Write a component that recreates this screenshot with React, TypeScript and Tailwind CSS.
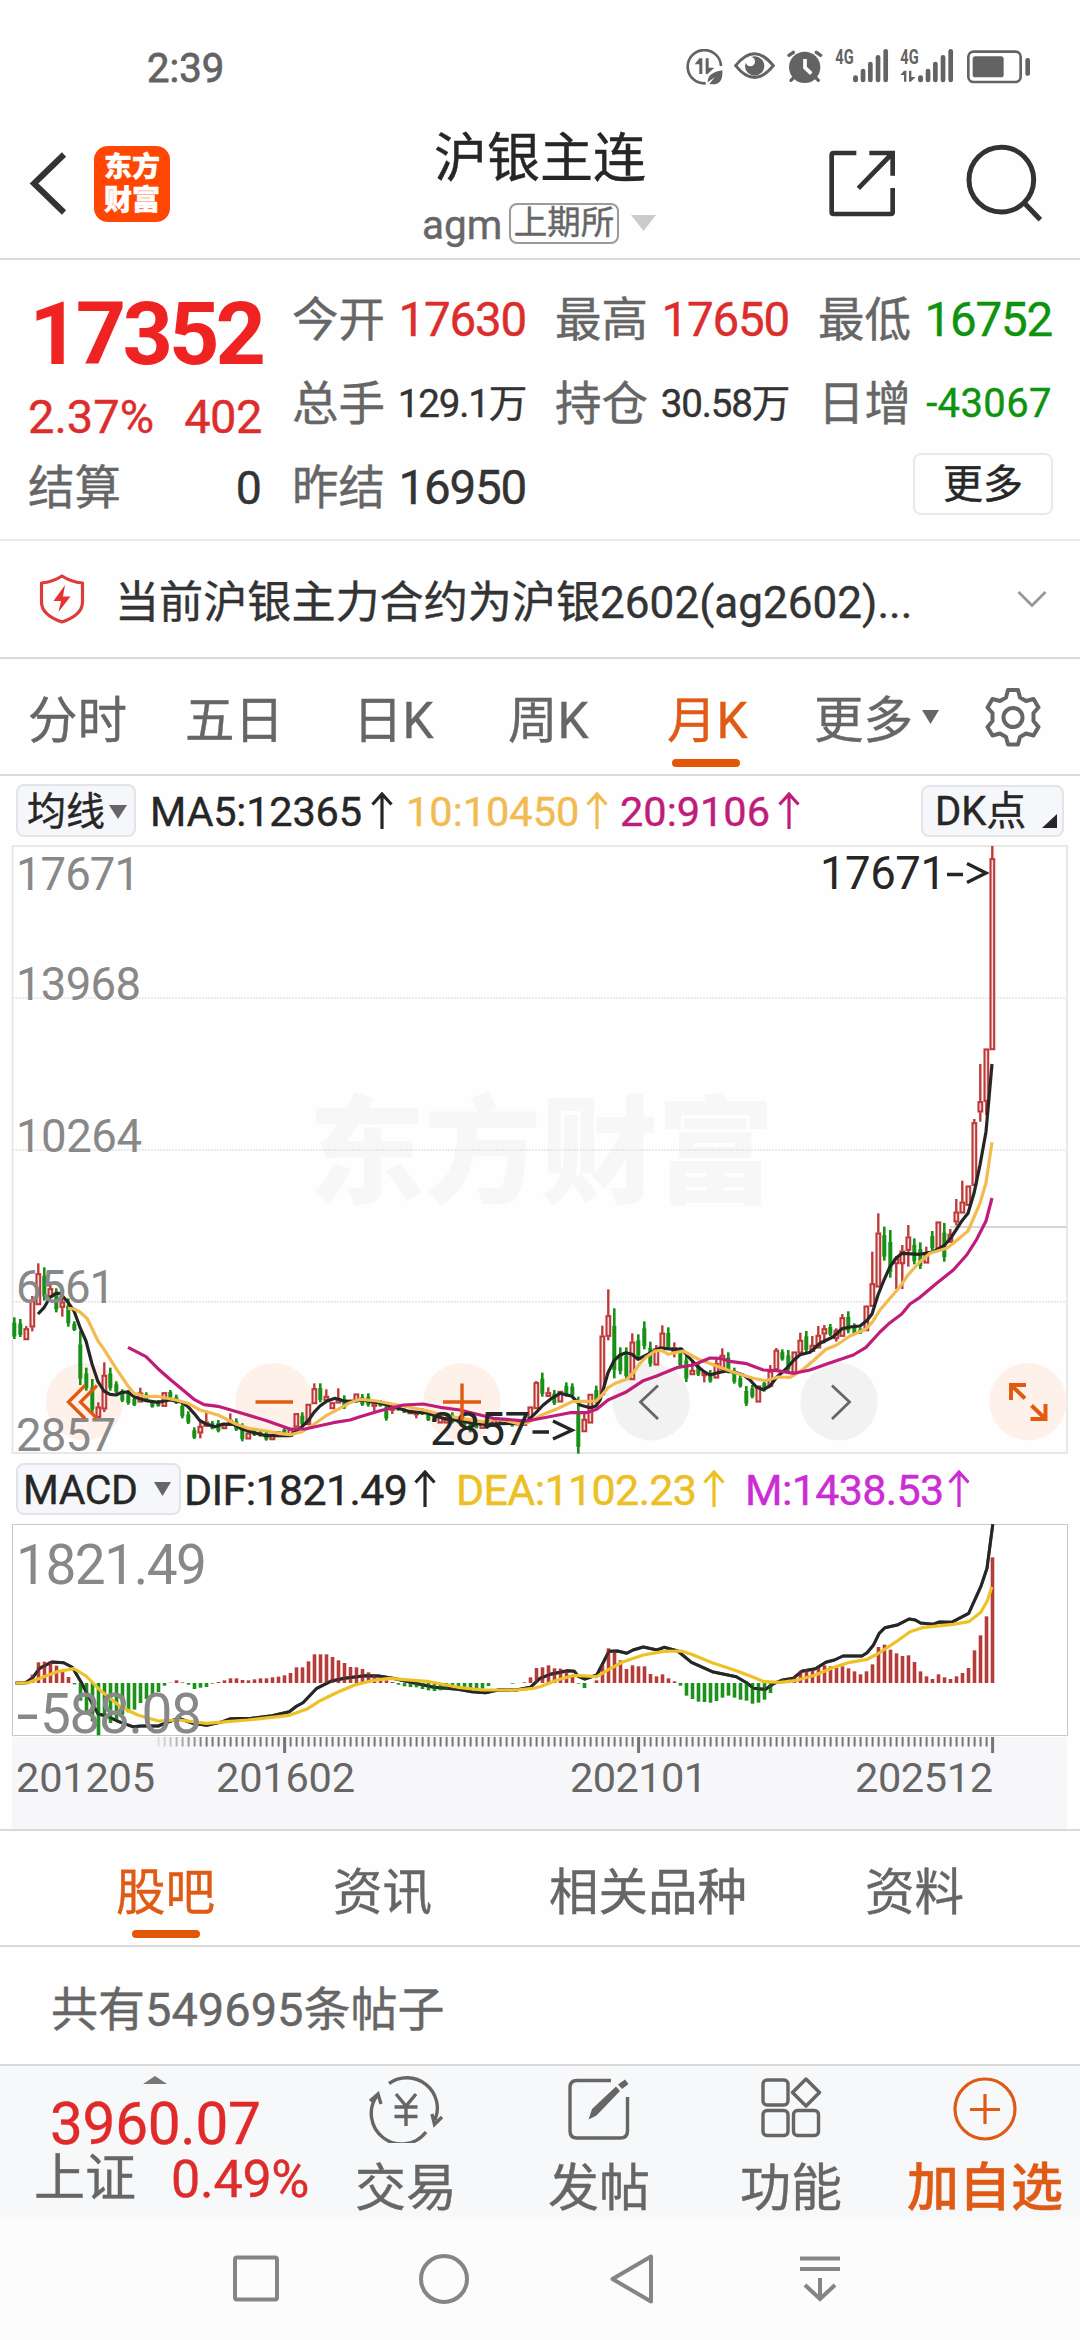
import React from "react";

/* ---------- chart data ---------- */

// Each candle: colour, high, body top, body bottom, low (units of 1/3 px below the section's origin).
type Candle = ["r" | "g", number, number, number, number];

const g = (hi: number, lo: number): Candle => ["g", hi, hi + (lo - hi) * 0.25, lo - (lo - hi) * 0.12, lo];
const r = (top: number, bottom: number, hi = top, lo = bottom): Candle => ["r", hi, top, bottom, lo];

const early: Candle[] = [
  g(232, 297), g(237, 291), r(265, 300, 258), r(180, 262, 168, 274), r(100, 195, 70), g(82, 182), r(145, 172, 125), g(145, 217),
  r(185, 203, 165, 230), g(175, 260), g(244, 273), g(273, 435), g(383, 452), g(417, 520), r(500, 533, 487), r(405, 508, 367, 516),
  g(383, 452), g(424, 460), g(448, 486), g(450, 494), g(470, 498), r(458, 487, 443), g(457, 485), g(480, 503), g(480, 500),
  r(457, 500), g(450, 475), g(464, 492), g(485, 535), g(514, 552), g(562, 597), r(558, 580, 545, 595), r(545, 560, 512),
  g(543, 568), g(540, 577), r(553, 567), r(540, 557, 520), g(535, 573), g(550, 604), r(578, 598, 570), g(565, 588), g(570, 590),
  g(572, 602), r(582, 600), r(575, 590), g(565, 580), r(567, 590), r(520, 562), g(517, 558), r(492, 555), r(445, 492, 430),
  g(430, 487), r(468, 482, 448), r(487, 507), r(475, 490, 445), g(466, 507), r(480, 488), r(461, 482), g(462, 498), g(460, 500),
  r(488, 500, 488, 514), g(480, 500), g(487, 542), r(497, 512, 495, 522), g(500, 512), g(505, 519), r(510, 522), r(515, 525, 515, 535),
  g(505, 525), g(515, 543), g(520, 546), r(530, 550), r(537, 550), g(517, 550), g(530, 550), g(532, 560), g(545, 577),
  g(550, 565), r(552, 566), r(542, 560), r(537, 555), g(538, 552), r(540, 550), g(540, 560), r(545, 556), r(540, 557),
  r(500, 540), r(427, 507, 423), g(398, 470), r(457, 470, 442), g(450, 495), r(453, 487), g(427, 470), g(430, 470), g(470, 641),
  r(537, 576, 520), r(462, 550), g(437, 490), r(287, 465, 257), r(226, 290, 148, 301), g(205, 415), g(322, 403), g(322, 420),
  r(305, 420, 280), g(283, 355), g(244, 328), g(305, 380), r(325, 376, 315), r(278, 325, 256), g(262, 330), r(322, 340, 307, 352),
  g(322, 383), g(340, 426), r(390, 405, 360), g(370, 408), r(397, 408, 395, 427), g(390, 428), r(370, 415, 355),
];

const late: Candle[] = [
  r(945, 990, 925), g(937, 1000), g(983, 1031), g(1005, 1043), g(1038, 1098), g(1035, 1075), r(1037, 1087), g(1020, 1055),
  r(993, 1040, 975), r(930, 990, 924), g(928, 962), g(930, 995), r(935, 1000), r(900, 940, 878), g(873, 938), r(915, 935, 888),
  r(885, 925, 858), r(865, 883, 855, 910), g(852, 888), r(870, 897, 865, 905), r(832, 890, 822), g(814, 880), g(850, 883),
  g(862, 882), r(797, 873), r(730, 800, 635), r(578, 742, 520), g(560, 662), g(570, 713), r(655, 672, 648, 747),
  r(632, 672, 615, 747), r(590, 632, 555, 680), g(595, 673), g(607, 687), r(642, 670, 620), g(573, 632), r(545, 630),
  g(549, 665), r(582, 608, 567), r(515, 547, 477, 556), r(485, 520, 422), r(437, 497), r(247, 437, 237), r(184, 217, 72, 245),
  r(26, 185, 26, 226), r(-545, 30, -582),
];

const macd = [
  0, 0, 2, 25, 62, 64, 66, 52, 35, 18, -4, -53, -85, -115, -157, -130, -120, -110, -95, -88, -80, -60, -48, -35, -27, -8, 1, 8, 2,
  -5, -18, -14, -12, -2, 3, 8, 14, 14, 9, 8, 11, 14, 14, 17, 19, 23, 30, 47, 47, 65, 86, 86, 86, 78, 68, 60, 48, 47, 42, 32, 27,
  15, 8, 3, -5, -10, -12, -13, -18, -22, -24, -22, -20, -18, -16, -18, -20, -20, -17, -9, 0, 0, 0, -2, 0, 2, 17, 45, 47, 53, 44, 43,
  38, 25, -2, -15, 0, 8, 55, 104, 95, 68, 42, 53, 50, 50, 27, 20, 26, 14, 5, -8, -38, -48, -56, -57, -59, -54, -44, -38, -44, -50,
  -53, -62, -59, -50, -30, 3, 12, 15, 20, 37, 40, 38, 45, 53, 50, 45, 50, 44, 35, 26, 35, 56, 108, 115, 100, 89, 81, 83, 63, 35,
  20, 12, 26, 17, 12, 20, 30, 45, 98, 143, 200, 377,
];

const ma5: number[][] = [
  [114,222,132,203,150,172,168,160,180,160,204,187,222,213,240,262,258,303,276,372,294,425,312,453,330,463,348,465,366,457,384,456,402,470,438,482,474,487,510,480,546,487,564,500,582,520,600,542,618,552,645,560,670,552,700,553,726,567,762,578,798,587,834,587,870,587,888,573,906,560,924,543,942,517,960,498,980,484,1005,475,1032,483,1068,484],
  [0,480,50,487,100,500,150,515,200,519,250,535,300,542,350,552,400,552,460,550,500,545,528,518,550,495,575,475,600,460,636,469,660,495,690,503,708,498,720,480,732,440,744,398,762,362,780,345,798,338,816,343,834,358,860,345,900,324,942,328,965,327,980,345,1010,377,1030,393,1050,405,1078,397],
  [20,993,45,997,70,1005,90,1020,110,1042,130,1049,150,1038,170,1012,200,985,222,960,240,944,270,937,300,910,340,890,366,866,390,861,420,858,440,842,456,822,474,765,492,720,510,680,528,655,546,640,600,643,640,635,672,617,690,597,708,570,726,542,744,520,762,460,780,375,798,275,816,72],
];
const ma10: number[][] = [
  [204,205,222,207,240,216,262,236,294,303,312,328,348,385,384,438,402,460,438,470,470,469,528,480,564,490,600,510,654,525,708,552,744,565,798,573,834,580,870,584,906,575,942,553,978,527,1014,508,1050,488],
  [0,478,50,483,100,493,150,502,200,512,250,525,300,535,380,547,400,537,440,542,480,552,505,547,545,525,590,507,636,485,672,484,708,483,726,465,744,443,770,428,800,418,820,398,840,370,860,350,885,333,905,331,925,343,970,333,1014,357],
  [0,982,50,1000,100,1015,135,1022,175,1011,210,1012,240,995,280,962,318,928,350,915,390,888,436,868,456,848,480,810,510,775,540,740,564,705,600,665,630,640,680,625,700,610,744,573,780,490,798,428,816,307],
];
const ma20: number[][] = [
  [384,322,438,350,474,386,510,418,546,448,582,478,612,494,654,499,726,520,800,542,870,567,915,567,1000,548,1050,540],
  [0,530,60,512,130,495,190,492,240,502,300,510,400,535,500,543,560,532,630,518,680,518,710,508,744,480,800,455,850,422,890,408,950,383,1000,375,1050,354],
  [0,955,30,964,80,971,130,990,170,992,222,1000,270,990,318,973,400,945,438,922,480,876,510,848,545,822,570,792,600,772,650,730,700,690,740,645,770,598,798,543,816,474],
];
const dif: number[][] = [
  [45,669,75,668,95,653,115,625,150,606,185,608,210,622,235,665,260,715,285,762,310,768,345,785,385,800,410,798,460,798,490,785,520,775,560,790,600,796,640,787,670,776,730,775,790,767,840,755,862,738,880,728,920,685,960,664,1000,655,1060,647,1100,648,1140,655,1200,668,1260,682,1330,688,1370,695,1410,698,1450,689,1500,690,1540,682],
  [0,655,30,643,80,632,100,634,110,648,130,657,165,645,180,615,200,574,225,573,252,580,270,570,300,561,340,570,360,562,400,573,440,607,500,635,570,650,600,668,620,685,655,688,680,670,705,660,735,655,760,634,800,626,830,607,855,600,880,588,935,588,950,578,968,556,985,520,1002,503,1040,494,1072,477,1090,480,1105,489,1140,493,1160,486,1195,487,1245,460,1280,380,1298,325,1315,193],
];
const dea: number[][] = [
  [45,669,80,669,120,653,170,634,215,626,250,648,290,690,350,740,400,765,460,783,520,780,600,790,660,785,720,780,840,766,890,748,930,722,980,697,1030,675,1080,662,1130,655,1240,664,1330,682,1400,690,1500,690,1550,685],
  [0,680,50,660,100,646,165,650,200,628,240,606,300,585,360,574,410,573,440,583,500,608,570,632,620,652,650,665,700,667,740,662,800,645,850,623,900,607,950,598,980,582,1030,548,1075,515,1110,503,1200,493,1245,485,1280,457,1300,420,1312,380],
];

const origins = [
  [0, 1240],
  [360, 1240],
  [720, 1040],
];

function pricePath(parts: number[][]) {
  const pts: string[] = [];
  parts.forEach((p, k) => {
    for (let i = 0; i < p.length; i += 2) {
      pts.push(`${(origins[k][0] + p[i] / 3).toFixed(1)},${(origins[k][1] + p[i + 1] / 3).toFixed(1)}`);
    }
  });
  return pts.join(" ");
}

function macdPath(parts: number[][]) {
  const pts: string[] = [];
  parts.forEach((p, k) => {
    for (let i = 0; i < p.length; i += 2) {
      pts.push(`${(k * 540 + p[i] / 2.904).toFixed(1)},${(1460 + p[i + 1] / 3).toFixed(1)}`);
    }
  });
  return pts.join(" ");
}

const xOf = (i: number) => 14.2 + i * 6;
const RED = "#bd3a38";
const GREEN = "#169116";

function CandleMark({ c, x, base }: { c: Candle; x: number; base: number }) {
  const [kind, hi, top, bottom, lo] = c;
  const y = (v: number) => base + v / 3;
  if (kind === "g") {
    return (
      <>
        <rect x={x - 1.2} y={y(hi)} width={2.6} height={(lo - hi) / 3} fill={GREEN} />
        <rect x={x - 1.9} y={y(top)} width={4} height={(bottom - top) / 3} fill={GREEN} />
      </>
    );
  }
  return (
    <>
      {hi < top && <rect x={x - 1.1} y={y(hi)} width={2.4} height={(top - hi) / 3} fill={RED} />}
      {lo > bottom && <rect x={x - 1.1} y={y(bottom)} width={2.4} height={(lo - bottom) / 3} fill={RED} />}
      <rect x={x - 1.7} y={y(top) + 0.8} width={3.7} height={Math.max(1, (bottom - top) / 3 - 1.6)} fill="#f7dcdc" stroke={RED} strokeWidth={2.1} />
    </>
  );
}

const FONT = 'Roboto, "Noto Sans CJK SC", sans-serif';

function PriceChart() {
  return (
    <svg className="block overflow-visible" width={1080} height={610} viewBox="0 845 1080 610" fontFamily={FONT}>
      <text x={308} y={1194} fontSize={117} fontWeight={900} fill="#f7f7f7" textLength={466}>东方财富</text>
      <rect x={12.5} y={846} width={1054.5} height={607} fill="none" stroke="#e3e3e3" strokeWidth={1.6} />
      {[998, 1150, 1301.7].map((y) => (
        <line key={y} x1={13} x2={1067} y1={y} y2={y} stroke="#e4e4e4" strokeWidth={1.4} strokeDasharray="2 1" />
      ))}
      {[84.7, 274, 462, 1028].map((x) => (
        <circle key={x} cx={x} cy={1401.7} r={38.7} fill="#fef1ea" />
      ))}
      {[651, 839].map((x) => (
        <circle key={x} cx={x} cy={1401.7} r={38.7} fill="#f2f2f2" />
      ))}
      <line x1={950} x2={1067} y1={1227} y2={1227} stroke="#d6d5db" strokeWidth={1.8} />
      {early.map((c, i) => (
        <CandleMark key={i} c={c} x={xOf(i)} base={1240} />
      ))}
      {late.map((c, i) => (
        <CandleMark key={i} c={c} x={xOf(early.length + i)} base={1040} />
      ))}
      <g fill="none" strokeWidth={3.2} strokeLinejoin="round">
        <polyline points={pricePath(ma5)} stroke="#262626" />
        <polyline points={pricePath(ma10)} stroke="#f1bb50" />
        <polyline points={pricePath(ma20)} stroke="#c01c7a" />
      </g>
      <g fontSize={45.5} fill="#888">
        <text x={16} y={890} textLength={124}>17671</text>
        <text x={16} y={999.5} textLength={125}>13968</text>
        <text x={16} y={1151.5} textLength={126}>10264</text>
        <text x={16} y={1303} textLength={99}>6561</text>
        <text x={16} y={1451} textLength={100}>2857</text>
      </g>
      <g fontSize={45.5} fill="#262626">
        <text x={820} y={889} textLength={126}>17671</text>
        <text x={430} y={1445} textLength={100}>2857</text>
      </g>
      <g fill="none" stroke="#262626" strokeWidth={3.4}>
        <path d="M947 874.500H963M967 863.500L986 873L967 882.500" />
        <path d="M532.500 1432H549M553 1421L572 1430.200L553 1439" />
      </g>
      <g fill="none" stroke="#e05a10" strokeWidth={3.4}>
        <path d="M85 1385.500L68.500 1402L85 1418.500M97 1385.500L80.500 1402L97 1418.500" />
        <path d="M255.500 1402H293" />
        <path d="M443 1402H481M462 1383.500V1420.500" />
        <path d="M1026 1385H1011V1400M1011.500 1385.500L1025 1398.500M1030.500 1419H1045.500V1404M1045 1418.500L1031.500 1405.500" strokeWidth={4} />
      </g>
      <g fill="none" stroke="#666" strokeWidth={2.8}>
        <path d="M658 1385.500L640.500 1402L658 1419" />
        <path d="M832 1385.500L849.500 1402L832 1419" />
      </g>
    </svg>
  );
}

function MacdChart() {
  return (
    <svg className="block overflow-visible" width={1080} height={306} viewBox="0 1523 1080 306" fontFamily={FONT}>
      <rect x={12} y={1737} width={1055} height={92} fill="#f7f7f9" />
      <rect x={12.5} y={1524.5} width={1055} height={211} fill="#fff" stroke="#c8c8c8" strokeWidth={1} />
      <polyline points={macdPath(dif)} fill="none" stroke="#262626" strokeWidth={3} strokeLinejoin="round" />
      {macd.map((v, i) =>
        v === 0 ? null : (
          <rect
            key={i}
            x={xOf(i) - 1.5}
            y={v > 0 ? 1683 - v / 3 : 1683}
            width={3.6}
            height={Math.abs(v) / 3}
            fill={v > 0 ? "#b43c3a" : "#1c921c"}
          />
        )
      )}
      <polyline points={macdPath(dif)} fill="none" stroke="#262626" strokeWidth={3} strokeOpacity={0.7} strokeLinejoin="round" />
      <polyline points={macdPath(dea)} fill="none" stroke="#eec227" strokeWidth={3.2} strokeLinejoin="round" />
      <g fontSize={55} fill="#888">
        <text x={16} y={1584} textLength={191}>1821.49</text>
        <text x={40} y={1733} textLength={162}>588.08</text>
        <rect x={18} y={1714.500} width={19} height={4.500} />
      </g>
      {Array.from({ length: 140 }, (_, k) => k + 24).map((i) => {
        const long = i === 45 || i === 104 || i === 163;
        return (
          <rect
            key={i}
            x={xOf(i) + 0.4 - (long ? 1.5 : 1)}
            y={1737}
            width={long ? 3 : 2}
            height={long ? 16 : 9.5}
            fill="#757575"
            opacity={Math.min(1, (i - 22) / 10)}
          />
        );
      })}
      <g fontSize={41.500} fill="#666">
        <text x={16} y={1792} textLength={139}>201205</text>
        <text x={216} y={1792} textLength={139}>201602</text>
        <text x={570} y={1792} textLength={137}>202101</text>
        <text x={855} y={1792} textLength={138}>202512</text>
      </g>
    </svg>
  );
}

/* ---------- small pieces ---------- */

function Caret({ w, h, color, up = false }: { w: number; h: number; color: string; up?: boolean }) {
  return (
    <svg className="block shrink-0" width={w} height={h} viewBox="0 0 10 10" preserveAspectRatio="none">
      <path d={up ? "M5 0L10 10H0z" : "M0 0H10L5 10z"} fill={color} />
    </svg>
  );
}

function UpArrow() {
  return (
    <svg className="block shrink-0" width={22} height={38} viewBox="0 0 22 38" fill="none" stroke="currentColor" strokeWidth={3.2}>
      <path d="M11 2V37M1.500 12.500L11 2L20.500 12.500" />
    </svg>
  );
}

function Signal({ data = false }: { data?: boolean }) {
  return (
    <svg className="block overflow-visible" width={53.4} height={34} viewBox="0 0 160 102" fill="#636363">
      <text x={1} y={44} fontSize={60} fontWeight={700} fontFamily="Roboto, sans-serif" textLength={55} lengthAdjust="spacingAndGlyphs">4G</text>
      <rect x={54} y={79} width={15} height={21} rx={7} />
      <rect x={77} y={59} width={14} height={41} rx={7} />
      <rect x={99} y={38} width={14} height={62} rx={7} />
      <rect x={122} y={18} width={14} height={82} rx={7} />
      <rect x={145} y={0} width={14} height={100} rx={7} />
      {data && <path d="M12 65H19V98H12V78H1zM27 65H34V84H47L32 98H27z" />}
    </svg>
  );
}

function StatusBar() {
  return (
    <div className="flex h-[100px] items-start text-[#636363]">
      <span className="ml-[147px] mt-[45px] w-[79px] whitespace-nowrap text-[40px] leading-[48px] [-webkit-text-stroke:0.8px]">2:39</span>
      <svg className="ml-[460px] mt-[49px] block" width={37} height={37} viewBox="78 57 111 111">
        <path d="M183 108A50 50 0 1 0 137 160" fill="none" stroke="#636363" strokeWidth={8} />
        <path d="M118 85H127V132H118V103H104zM137 85H146V113H163L143 132H137z" fill="#636363" />
        <path d="M187 121Q190 163 158 163L148 162L164 142L143 157Q142 128 187 121z" fill="#636363" />
      </svg>
      <svg className="ml-[11px] mt-[52px] block" width={41} height={28} viewBox="222 68 123 84">
        <path d="M227 109Q283 38 340 109Q283 180 227 109z" fill="none" stroke="#636363" strokeWidth={9} />
        <circle cx={284} cy={110} r={29} fill="#636363" />
        <circle cx={271} cy={97} r={14} fill="#fff" />
      </svg>
      <svg className="ml-[12px] mt-[50px] block" width={36} height={34} viewBox="380 60 108 102">
        <circle cx={433} cy={112} r={47} fill="#636363" />
        <path d="M386 76L399 67M481 76L468 67M392 151L400 143M474 151L466 143" stroke="#636363" strokeWidth={10} strokeLinecap="round" />
        <path d="M434 87V113L453 131" fill="none" stroke="#fff" strokeWidth={11} />
      </svg>
      <div className="ml-[12px] mt-[49px]"><Signal /></div>
      <div className="ml-[12px] mt-[49px]"><Signal data /></div>
      <svg className="ml-[13px] mt-[50px] block" width={63} height={34} viewBox="915 59 189 102">
        <rect x={919} y={64} width={157} height={91} rx={16} fill="none" stroke="#636363" strokeWidth={8} />
        <rect x={932} y={78} width={93} height={63} rx={8} fill="#636363" />
        <rect x={1090} y={83} width={14} height={53} rx={6} fill="#636363" />
      </svg>
    </div>
  );
}

function Header() {
  return (
    <header className="flex h-[160px] items-start border-b-2 border-[#d9d9d9]">
      <svg className="ml-[29px] mt-[52px] block" width={38} height={63} viewBox="29 152 38 63" fill="none" stroke="#333" strokeWidth={6}>
        <path d="M64 154.500L34 183.500L64 212.500" />
      </svg>
      <div className="ml-[27px] mt-[46px] flex h-[76px] w-[76px] flex-col items-center justify-center rounded-[14px] bg-[#ff4602] text-[28px] font-black leading-[33px] text-white">
        <span>东方</span>
        <span>财富</span>
      </div>
      <div className="ml-[247px] mt-[23px] flex w-[246px] flex-col items-center">
        <h1 className="whitespace-nowrap text-[53px] leading-[72px] text-[#262626]">沪银主连</h1>
        <div className="flex h-[56px] w-full items-center text-[#666]">
          <span className="ml-[5px] w-[81px] whitespace-nowrap pt-[3px] text-[40.500px] leading-[50px]">agm</span>
          <span className="ml-[6px] flex h-[41px] w-[110px] items-center justify-center whitespace-nowrap rounded-lg border-2 border-[#9b9b9b] text-[33.500px] leading-[38px]">上期所</span>
          <span className="ml-[12px]"><Caret w={25} h={16} color="#cbcbcb" /></span>
        </div>
      </div>
      <svg className="ml-[166px] mt-[50px] block" width={68} height={68} viewBox="506 361 204 204" fill="none" stroke="#333" strokeWidth={14}>
        <path d="M588 370H520Q514 370 514 376V547Q514 553 520 553H691Q697 553 697 547V475" />
        <path d="M627 370H697V438M697 370L594 476" />
      </svg>
      <svg className="ml-[69px] mt-[44px] block" width={77} height={78} viewBox="915 343 231 234" fill="none" stroke="#333" strokeWidth={15}>
        <circle cx={1021} cy={450} r={97} />
        <path d="M1090 520L1138 570" />
      </svg>
    </header>
  );
}

function Stat({ label, value, tone, size = "text-[47.500px] tracking-[-0.025em]" }: { label: string; value: string; tone: string; size?: string }) {
  return (
    <div className="flex h-[84px] items-center justify-between whitespace-nowrap pt-[5px]">
      <span className="text-[46.500px] leading-[50px] text-[#666]">{label}</span>
      <span className={`${size} leading-[50px] ${tone}`}>{value}</span>
    </div>
  );
}

function Quote() {
  const small = "text-[38.500px] tracking-[-0.03em]";
  return (
    <section className="flex h-[281px] border-b-2 border-[#ebebeb]">
      <div className="ml-[28px] w-[234px] whitespace-nowrap pt-[32px]">
        <div className="text-right text-[88px] font-bold leading-[84px] tracking-[-0.045em] text-[#f02323] [-webkit-text-stroke:0px]">
          <span>17352</span>
        </div>
        <div className="mt-[16px] flex justify-between text-[47px] leading-[50px] text-[#dc2d2d]">
          <span>2.37%</span>
          <span className="tracking-[-0.01em]">402</span>
        </div>
        <div className="mt-[20px] flex justify-between text-[46.500px] leading-[52px] text-[#666]">
          <span>结算</span>
          <span className="text-[#333]">0</span>
        </div>
      </div>
      <div className="ml-[30px] mt-[15px] w-[234px]">
        <Stat label="今开" value="17630" tone="text-[#dc2d2d]" />
        <Stat label="总手" value="129.1万" tone="text-[#333]" size={small} />
        <Stat label="昨结" value="16950" tone="text-[#333]" />
      </div>
      <div className="ml-[29px] mt-[15px] w-[234px]">
        <Stat label="最高" value="17650" tone="text-[#dc2d2d]" />
        <Stat label="持仓" value="30.58万" tone="text-[#333]" size={small} />
      </div>
      <div className="ml-[29px] mt-[15px] w-[234px]">
        <Stat label="最低" value="16752" tone="text-[#0f930f]" />
        <Stat label="日增" value="-43067" tone="text-[#0f930f]" size="text-[40px] tracking-[0.01em]" />
        <div className="-mr-px ml-auto mt-[10px] flex h-[62px] w-[140px] items-center justify-center rounded-lg border-2 border-[#e8ebeb] pt-[2px] text-[40px] leading-[50px] text-[#262626]">更多</div>
      </div>
    </section>
  );
}

function Notice() {
  return (
    <section className="flex h-[118px] items-center border-b-2 border-[#d9d9d9] text-[#333]">
      <svg className="ml-[39px] block" width={46} height={52} viewBox="39 572 46 52">
        <path d="M62 575Q71 581 82.500 582V601Q82.500 614 62 621Q41.500 614 41.500 601V582Q53 581 62 575z" fill="none" stroke="#dc3c3a" strokeWidth={3.200} strokeLinejoin="round" />
        <path d="M65 584L53.500 600H61L58.500 611L70.500 595.500H63z" fill="#e8322f" />
      </svg>
      <span className="ml-[30px] w-[800px] whitespace-nowrap pt-[7px] text-[44.100px] leading-[54px]">当前沪银主力合约为沪银2602(ag2602)...</span>
      <svg className="ml-[102px] block" width={30} height={18} viewBox="0 0 30 18" fill="none" stroke="#999" strokeWidth={2.8}>
        <path d="M1.500 2L15 15.500L28.500 2" />
      </svg>
    </section>
  );
}

function PeriodTabs() {
  const tabs = ["分时", "五日", "日K", "周K", "月K"];
  return (
    <nav className="grid h-[117px] grid-cols-[157px_168px_155px_159px_147px_169px_60px] items-center whitespace-nowrap border-b-2 border-[#d9d9d9] pl-[28px] text-[49.500px] leading-[60px] text-[#666]">
      {tabs.map((t) => (
        <div key={t} className={`relative pt-[8px] ${t === "月K" ? "text-[#df5b15]" : ""}`}>
          {t}
          {t === "月K" && <span className="absolute -bottom-[16px] left-[5px] h-[8px] w-[68px] rounded-full bg-[#e35709]" />}
        </div>
      ))}
      <div className="flex items-center pt-[8px]">
        更多
        <span className="mb-[8px] ml-[9px]"><Caret w={17} h={14} color="#666" /></span>
      </div>
      <svg className="mt-px block" width={60} height={60} viewBox="0 0 60 60" fill="none" stroke="#666" strokeWidth={4}>
        <path d="M25 3H35L37 10.500L43 14L50.500 12L55.500 20.500L50.500 26V34L55.500 40L50.500 48.500L43 46.500L37 50L35 57.500H25L23 50L17 46.500L9.500 48.500L4.500 40L9.500 34V26L4.500 20.500L9.500 12L17 14L23 10.500z" strokeLinejoin="round" />
        <circle cx={30} cy={30.500} r={9.500} />
      </svg>
    </nav>
  );
}

function MaRow() {
  return (
    <div className="flex h-[69px] items-center whitespace-nowrap text-[41.500px] leading-[50px] text-[#262626]">
      <div className="ml-[16px] flex h-[53px] w-[120px] items-center rounded-lg border-2 border-[#e3e5e8] bg-[#f6f7fa] pl-[9px] pt-[2px] text-[39px]">
        均线
        <span className="ml-[4px]"><Caret w={18} h={14} color="#666" /></span>
      </div>
      <span className="ml-[14px] w-[221px] pt-[2px] tracking-[-0.005em]">MA5:12365</span>
      <UpArrow />
      <span className="ml-[13px] w-[180px] pt-[2px] text-[#f1bb50]">10:10450</span>
      <span className="text-[#f1bb50]"><UpArrow /></span>
      <span className="ml-[12px] w-[158px] pt-[2px] text-[#c01c7a]">20:9106</span>
      <span className="text-[#c01c7a]"><UpArrow /></span>
      <div className="ml-[121px] flex h-[52px] w-[143px] items-center rounded-lg border-2 border-[#e3e5e8] bg-[#f6f7fa] pl-[12px] text-[40px]">
        <span className="w-[107px] pt-[2px]">DK点</span>
        <svg className="mt-[20px] block" width={15} height={14} viewBox="0 0 15 14"><path d="M15 0V14H0z" fill="#262626" /></svg>
      </div>
    </div>
  );
}

function MacdRow() {
  return (
    <div className="flex h-[68px] items-center whitespace-nowrap text-[43px] leading-[50px] tracking-[-0.01em] text-[#262626]">
      <div className="ml-[16px] flex h-[52px] w-[165px] items-center rounded-lg border-2 border-[#e0e4e8] bg-[#f6f7fa] pl-[5px] text-[41px]">
        <span className="w-[131px] pt-px">MACD</span>
        <Caret w={17} h={14} color="#666" />
      </div>
      <span className="ml-[3px] w-[230px] pt-[2px] tracking-[-0.015em]">DIF:1821.49</span>
      <UpArrow />
      <span className="ml-[20px] w-[247px] pt-[2px] tracking-[-0.015em] text-[#ecc022]">DEA:1102.23</span>
      <span className="text-[#ecc022]"><UpArrow /></span>
      <span className="ml-[20px] w-[203px] pt-[2px] tracking-[-0.015em] text-[#cb2cd3]">M:1438.53</span>
      <span className="text-[#cb2cd3]"><UpArrow /></span>
    </div>
  );
}

function ContentTabs() {
  return (
    <nav className="grid h-[118px] grid-cols-[217px_216px_316px_150px] items-center whitespace-nowrap border-y-2 border-[#d9d9d9] pl-[116px] text-[49.500px] leading-[60px] text-[#666]">
      <div className="relative pt-[9px] text-[#df5b15]">
        股吧
        <span className="absolute -bottom-[15px] left-[16px] h-[8px] w-[68px] rounded-full bg-[#e35709]" />
      </div>
      <div className="pt-[9px]">资讯</div>
      <div className="pt-[9px]">相关品种</div>
      <div className="pt-[9px]">资料</div>
    </nav>
  );
}

function BottomBar() {
  return (
    <section className="flex h-[153px] whitespace-nowrap border-t-2 border-[#d9d9d9] bg-[#f7f8fa] text-[51px] leading-[50px] text-[#666]">
      <div className="ml-[34px] w-[280px]">
        <div className="ml-[109px] mt-[10px]"><Caret w={24} h={8} color="#777" up /></div>
        <div className="ml-[16px] mt-[10px] text-[58.500px] leading-[60px] tracking-[-0.005em] text-[#e02a2a]">3960.07</div>
        <div className="flex h-[52px] items-center">
          <span className="mt-[-3px]">上证</span>
          <span className="ml-[35px] text-[52px] tracking-[-0.005em] text-[#dc2d2d]">0.49%</span>
        </div>
      </div>
      <div className="ml-[27px] flex w-[130px] flex-col items-center">
        <svg className="mt-[9px] block shrink-0" width={76} height={68} viewBox="368 2075 76 68" fill="none" stroke="#666" strokeWidth={3.4}>
          <path d="M389 2083.500A30.500 30.500 0 0 1 435 2120M426 2132A30.500 30.500 0 0 1 377.500 2095M370 2101L378 2094L381 2104M442 2117L434.500 2124.500L432 2114" />
          <path d="M396 2094L406 2106L416 2094M406 2106V2126M394.500 2107H417.500M394.500 2116.500H417.500" />
        </svg>
        <span className="mt-[21px]">交易</span>
      </div>
      <div className="ml-[63px] flex w-[130px] flex-col items-center">
        <svg className="mt-[11px] block shrink-0" width={64} height={64} viewBox="567 2077 64 64" fill="none" stroke="#666" strokeWidth={3.4}>
          <path d="M611 2080.500H577Q570 2080.500 570 2087.500V2131Q570 2138 577 2138H620Q627.500 2138 627.500 2131V2097" />
          <path d="M588.500 2119.500L592 2109L616 2086.500L620 2091L596.500 2115.500zM618 2084.500L625 2079.500L628.500 2084L622 2089z" fill="#666" stroke="none" />
        </svg>
        <span className="mt-[23px]">发帖</span>
      </div>
      <div className="ml-[62px] flex w-[130px] flex-col items-center">
        <svg className="mt-[11px] block shrink-0" width={62} height={62} viewBox="760 2079 62 62" fill="none" stroke="#666" strokeWidth={3.4} strokeLinejoin="round">
          <rect x={763} y={2082} width={25} height={25} rx={4} />
          <rect x={763} y={2112.500} width={25} height={25} rx={4} />
          <rect x={793.500} y={2112.500} width={25} height={25} rx={4} />
          <path d="M806 2081L819.500 2094.500L806 2108L792.500 2094.500z" />
        </svg>
        <span className="mt-[25px]">功能</span>
      </div>
      <div className="ml-[49px] flex w-[160px] flex-col items-center text-[#df5b15]">
        <svg className="mt-[10px] block shrink-0" width={66} height={66} viewBox="0 0 66 66" fill="none" stroke="currentColor" strokeWidth={3.2}>
          <circle cx={33} cy={33} r={30} />
          <path d="M33 18V48M18 33.500H48" />
        </svg>
        <span className="mt-[22px] text-[52px] font-medium">加自选</span>
      </div>
    </section>
  );
}

function SystemNav() {
  return (
    <div className="flex h-[123px] items-start bg-[#fcfcfc] pt-[36px]">
      <svg className="ml-[231px] block" width={50} height={50} viewBox="0 0 50 50" fill="none" stroke="#858585" strokeWidth={4}>
        <rect x={4} y={4.500} width={42} height={42} rx={2} />
      </svg>
      <svg className="ml-[137px] block" width={52} height={52} viewBox="0 0 52 52" fill="none" stroke="#858585" strokeWidth={4}>
        <circle cx={26} cy={26} r={23} />
      </svg>
      <svg className="ml-[139px] block" width={46} height={52} viewBox="0 0 46 52" fill="none" stroke="#858585" strokeWidth={4} strokeLinejoin="round">
        <path d="M42 3.500V48.500L3.500 26z" />
      </svg>
      <svg className="ml-[144px] block" width={42} height={50} viewBox="0 0 42 50" fill="none" stroke="#858585" strokeWidth={4}>
        <path d="M1 5.500H41M1 16H41M21 25V46M6 32L21 46L36 32" />
      </svg>
    </div>
  );
}

export default function App() {
  return (
    <main className="h-[2340px] w-[1080px] overflow-hidden bg-[#fefefe] [-webkit-text-stroke:0.4px] [font-family:Roboto,'Noto_Sans_CJK_SC',sans-serif]">
      <StatusBar />
      <Header />
      <Quote />
      <Notice />
      <PeriodTabs />
      <MaRow />
      <PriceChart />
      <MacdRow />
      <MacdChart />
      <ContentTabs />
      <p className="flex h-[117px] items-center whitespace-nowrap pl-[51px] pt-[8px] text-[47px] leading-[60px] text-[#666]">共有549695条帖子</p>
      <BottomBar />
      <SystemNav />
    </main>
  );
}
